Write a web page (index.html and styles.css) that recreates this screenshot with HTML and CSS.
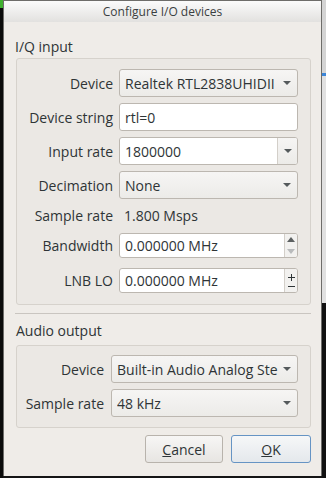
FILE: index.html
```html
<!DOCTYPE html>
<html lang="en">
<head>
    <meta charset="UTF-8">
    <title>Configure I/O devices</title>
    <link rel="stylesheet" href="styles.css">
</head>
<body>
    <div class="screen">
        <div class="edge-left"></div>

        <div class="dialog">
            <div class="titlebar">Configure I/O devices</div>

            <div class="content">
                <div class="section-title first">I/Q input</div>
                <div class="group iq">
                    <div class="row">
                        <span class="label">Device</span>
                        <div class="combo">
                            <span class="value">Realtek RTL2838UHIDII</span>
                            <span class="arrow"></span>
                        </div>
                    </div>
                    <div class="row">
                        <span class="label">Device string</span>
                        <div class="edit"><span class="value">rtl=0</span></div>
                    </div>
                    <div class="row">
                        <span class="label">Input rate</span>
                        <div class="edit combo-edit">
                            <span class="value">1800000</span>
                            <span class="drop"><span class="arrow"></span></span>
                        </div>
                    </div>
                    <div class="row">
                        <span class="label">Decimation</span>
                        <div class="combo">
                            <span class="value">None</span>
                            <span class="arrow"></span>
                        </div>
                    </div>
                    <div class="row text-row">
                        <span class="label">Sample rate</span>
                        <span class="plain">1.800 Msps</span>
                    </div>
                    <div class="row spin-row">
                        <span class="label">Bandwidth</span>
                        <div class="edit spin">
                            <span class="value">0.000000 MHz</span>
                            <span class="spin-btns">
                                <span class="up"></span>
                                <span class="down disabled"></span>
                            </span>
                        </div>
                    </div>
                    <div class="row spin-row lnb">
                        <span class="label">LNB LO</span>
                        <div class="edit spin">
                            <span class="value">0.000000 MHz</span>
                            <span class="spin-btns pm">
                                <span class="plus"></span>
                                <span class="minus"></span>
                            </span>
                        </div>
                    </div>
                </div>

                <div class="separator"></div>

                <div class="section-title">Audio output</div>
                <div class="group audio">
                    <div class="row">
                        <span class="label">Device</span>
                        <div class="combo">
                            <span class="value">Built-in Audio Analog Ste</span>
                            <span class="arrow"></span>
                        </div>
                    </div>
                    <div class="row">
                        <span class="label">Sample rate</span>
                        <div class="combo">
                            <span class="value">48 kHz</span>
                            <span class="arrow"></span>
                        </div>
                    </div>
                </div>

                <div class="buttons">
                    <button class="btn cancel"><u>C</u>ancel</button>
                    <button class="btn ok"><u>O</u>K</button>
                </div>
            </div>
        </div>

        <div class="edge-right">
            <div class="bit grey"></div>
            <div class="bit blue"></div>
            <div class="bit light"></div>
            <div class="bit black"></div>
        </div>
    </div>
</body>
</html>
```

FILE: styles.css
```css
body {
    margin: 0;
    background: #151515;
    font-family: "Open Sans", "DejaVu Sans", sans-serif;
    font-size: 14px;
    color: #2e3436;
    overflow: hidden;
}

.screen {
    display: flex;
    height: 478px;
}

.edge-left {
    width: 3px;
    background: linear-gradient(#3fb02f 0, #3fb02f 8px, #0b0b0b 8px);
}

.dialog {
    width: 317px;
    height: 475px;
    background: #efece8;
    border: 1px solid #6e6d6a;
    border-bottom: none;
    display: flex;
    flex-direction: column;
}

.titlebar {
    height: 21px;
    line-height: 21px;
    text-align: center;
    font-size: 12px;
    font-weight: 500;
    color: #3a3f41;
    background: linear-gradient(#fbfbfb, #e2e1df);
}

.content {
    padding: 0 10px 0 12px;
}

.section-title {
    height: 18px;
    line-height: 18px;
    margin: 8px 0 5px 0;
}
.section-title.first {
    margin-top: 16px;
    margin-bottom: 2px;
    margin-left: -1px;
}

.group {
    border: 1px solid #d6d2cc;
    border-radius: 3px;
    background: #ebe8e4;
    padding: 10px 12px 11px 0;
    display: flex;
    flex-direction: column;
    gap: 6px;
}
.group.audio {
    padding-top: 9px;
    padding-bottom: 10px;
}

.row {
    display: flex;
    align-items: center;
    height: 28px;
    gap: 6px;
}
.label {
    width: 96px;
    flex: none;
    text-align: right;
    white-space: nowrap;
}
.audio .row {
    gap: 7px;
}
.audio .label {
    width: 87px;
}

.text-row {
    height: 20px;
}
.plain {
    padding-left: 5px;
}
.spin-row {
    height: 25px;
    margin-top: 2px;
}
.spin-row.lnb {
    margin-top: 4px;
}

.combo, .edit {
    flex: 1;
    box-sizing: border-box;
    height: 100%;
    border: 1px solid #bcb7b0;
    border-radius: 3px;
    display: flex;
    align-items: center;
    padding-left: 5px;
    white-space: nowrap;
    overflow: hidden;
}
.combo {
    background: linear-gradient(#f6f5f4, #ecebe8);
    padding-right: 6px;
}
.edit {
    background: #ffffff;
}
.value {
    flex: 1;
    overflow: hidden;
}

.arrow {
    width: 0;
    height: 0;
    border-left: 4px solid transparent;
    border-right: 4px solid transparent;
    border-top: 4px solid #555a5c;
}

.combo-edit {
    padding-right: 0;
}
.drop {
    width: 19px;
    height: 100%;
    border-left: 1px solid #d3cfc9;
    background: linear-gradient(#f6f5f4, #ecebe8);
    display: flex;
    align-items: center;
    justify-content: center;
}

.spin {
    padding-right: 0;
}
.spin-btns {
    width: 12px;
    height: 100%;
    border-left: 1px solid #d3cfc9;
    background: #f2f1ef;
    display: flex;
    flex-direction: column;
    align-items: center;
    justify-content: space-around;
}
.up {
    width: 0;
    height: 0;
    border-left: 4px solid transparent;
    border-right: 4px solid transparent;
    border-bottom: 5px solid #5c6061;
}
.down {
    width: 0;
    height: 0;
    border-left: 4px solid transparent;
    border-right: 4px solid transparent;
    border-top: 5px solid #5c6061;
}
.down.disabled {
    border-top-color: #b9bbbc;
}

/* plus / minus drawn as small bars */
.pm {
    justify-content: center;
    gap: 5px;
}
.plus {
    width: 7px;
    height: 7px;
    background:
        linear-gradient(#2e3436, #2e3436) center / 7px 1px no-repeat,
        linear-gradient(#2e3436, #2e3436) center / 1px 7px no-repeat;
}
.minus {
    width: 7px;
    height: 1px;
    background: #2e3436;
}

.separator {
    height: 1px;
    background: #c9c5c0;
    margin: 8px 0 0 -1px;
}

.buttons {
    display: flex;
    justify-content: flex-end;
    gap: 8px;
    margin-top: 7px;
}
.btn {
    height: 28px;
    font-family: inherit;
    font-size: 14px;
    color: #2e3436;
    border: 1px solid #b8b3ac;
    border-radius: 3px;
    background: linear-gradient(#f7f6f5, #e7e5e2);
    padding: 0;
}
.btn.cancel {
    width: 78px;
}
.btn.ok {
    width: 80px;
    border-color: #6694c4;
    background: linear-gradient(#f6f7f8, #e4e8ec);
}

.edge-right {
    flex: 1;
    display: flex;
    flex-direction: column;
    background: #1a1a1a;
}
.bit.grey {
    height: 73px;
    background: #d4d4d4;
}
.bit.blue {
    height: 3px;
    background: #3d86d8;
}
.bit.light {
    height: 227px;
    background: #e1e1e1;
}
.bit.black {
    flex: 1;
    background: #111;
}
```
